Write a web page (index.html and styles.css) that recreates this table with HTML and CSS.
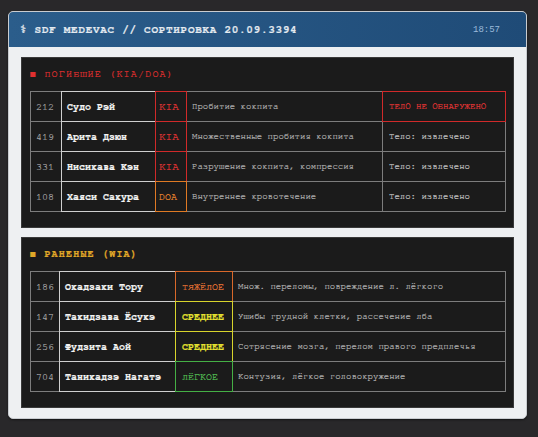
FILE: index.html
```html
<!DOCTYPE html>
<html lang="ru">
<head>
<meta charset="utf-8">
<title>SDF MEDEVAC</title>
<link rel="stylesheet" href="styles.css">
</head>
<body>
<div class="card">
  <header class="head">
    <span class="title">⚕ SDF MEDEVAC // СОРТИРОВКА 20.09.3394</span>
    <span class="time">18:57</span>
  </header>
  <div class="content">
    <section class="panel">
      <h2 class="sec sec-kia">■ ПОГИБШИЕ (KIA/DOA)</h2>
      <div class="grid grid-kia">
        <div class="c id">212</div><div class="c name">Судо Рэй</div><div class="c st kia">KIA</div><div class="c txt">Пробитие кокпита</div><div class="c note red">ТЕЛО НЕ ОБНАРУЖЕНО</div>
        <div class="c id">419</div><div class="c name">Арита Дзюн</div><div class="c st kia">KIA</div><div class="c txt">Множественные пробития кокпита</div><div class="c note">Тело: извлечено</div>
        <div class="c id">331</div><div class="c name">Нисикава Кэн</div><div class="c st kia">KIA</div><div class="c txt">Разрушение кокпита, компрессия</div><div class="c note">Тело: извлечено</div>
        <div class="c id">108</div><div class="c name">Хаяси Сакура</div><div class="c st doa">DOA</div><div class="c txt">Внутреннее кровотечение</div><div class="c note">Тело: извлечено</div>
      </div>
    </section>
    <section class="panel">
      <h2 class="sec sec-wia">■ РАНЕНЫЕ (WIA)</h2>
      <div class="grid grid-wia">
        <div class="c id">186</div><div class="c name">Окадзаки Тору</div><div class="c sev heavy">ТЯЖЁЛОЕ</div><div class="c txt">Множ. переломы, повреждение л. лёгкого</div>
        <div class="c id">147</div><div class="c name">Такидзава Ёсукэ</div><div class="c sev mid">СРЕДНЕЕ</div><div class="c txt">Ушибы грудной клетки, рассечение лба</div>
        <div class="c id">256</div><div class="c name">Фудзита Аой</div><div class="c sev mid">СРЕДНЕЕ</div><div class="c txt">Сотрясение мозга, перелом правого предплечья</div>
        <div class="c id">704</div><div class="c name">Таникадзэ Нагатэ</div><div class="c sev light">ЛЁГКОЕ</div><div class="c txt">Контузия, лёгкое головокружение</div>
      </div>
    </section>
  </div>
</div>
</body>
</html>
```

FILE: styles.css
```css
* { box-sizing: border-box; }
html, body { margin: 0; padding: 0; }
body {
  background: #29282a;
  font-family: "FreeMono", "Nimbus Mono PS", "Nimbus Mono L", "Courier", "Liberation Mono", "DejaVu Sans Mono", monospace;
  padding: 11px 0 0 8px;
  height: 437px;
  -webkit-text-stroke: 0.2px currentColor;
}
.card {
  width: 519px;
  background: #eef0f2;
  border: 1px solid #c9ccd0;
  border-radius: 5px;
  overflow: hidden;
  box-shadow: 0 1px 2px rgba(0,0,0,0.5);
}
.head {
  height: 35px;
  display: flex;
  align-items: center;
  justify-content: space-between;
  padding: 0 26px 0 11px;
  background: linear-gradient(90deg, #2b5d8b, #1f4b77);
}
.title {
  color: #e4eaf0;
  font-size: 11px;
  font-weight: bold;
  letter-spacing: 0.7px;
}
.time {
  color: #9cbbdb;
  font-size: 9px;
  font-family: "Liberation Mono", monospace;
  -webkit-text-stroke: 0;
}
.content {
  padding: 10px 12px 10px 12px;
  display: flex;
  flex-direction: column;
  gap: 9px;
}
.panel {
  background: #1b1b1b;
  border: 1px solid #3a3a3a;
  padding: 10px 8px 16px 8px;
}
.sec {
  margin: 0 0 11px 0;
  font-size: 10px;
  line-height: 12px;
  letter-spacing: 1.2px;
  font-weight: normal;
}
.sec-kia { color: #e03030; }
.sec-wia { color: #e0a828; font-weight: bold; }
.grid {
  display: grid;
  grid-auto-rows: 30px;
}
.grid-kia { grid-template-columns: 31px 94px 31px 196px 1fr; }
.grid-wia { grid-template-columns: 29px 116px 57px 1fr; }
.c {
  border: 1px solid #7d7d7d;
  margin: 0 -1px -1px 0;
  display: flex;
  align-items: center;
  padding: 0 5px;
  font-size: 9px;
  white-space: nowrap;
  color: #b0b0b0;
}
.id { color: #a8a8a8; font-size: 10px; }
.name {
  border-color: #cfcfcf;
  color: #f4f4f4;
  font-size: 10px;
  font-weight: bold;
  z-index: 1;
}
.note { color: #c4c4c4; padding-left: 6px; }
.note.red { color: #e83636; border-color: #d02a2a; z-index: 2; }
.st { z-index: 2; font-size: 11px; padding: 0 3px; }
.kia { color: #e83636; border-color: #d02a2a; }
.doa { color: #f08a30; border-color: #e07a24; font-size: 10px; }
.sev { z-index: 2; font-size: 10px; padding: 0 6px; }
.heavy { color: #f07a36; border-color: #d9682a; }
.mid { color: #e4e030; border-color: #d8d52c; font-weight: bold; }
.light { color: #55c055; border-color: #45b045; }
```
